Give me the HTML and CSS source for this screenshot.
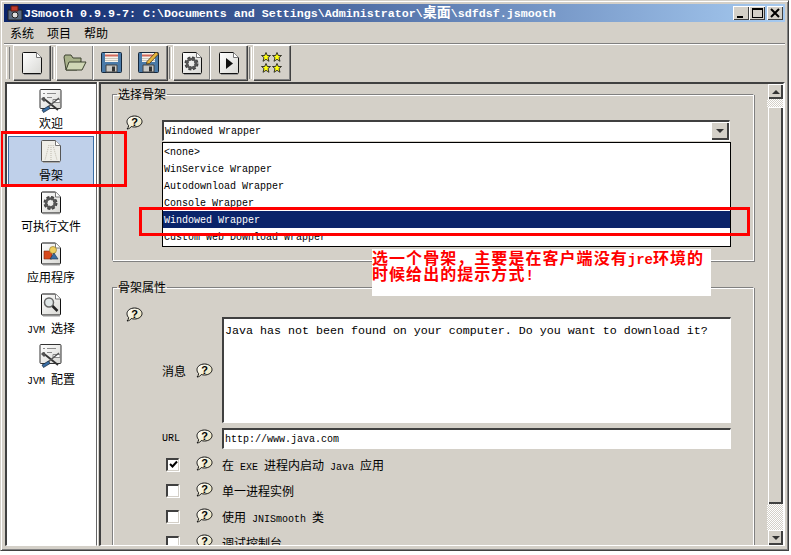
FILE: index.html
```html
<!DOCTYPE html>
<html lang="zh">
<head>
    <meta charset="UTF-8">
    <title>JSmooth</title>
    <link rel="stylesheet" href="styles.css">
</head>
<body>
    <svg class="defs" width="0" height="0">
        <defs>
            <linearGradient id="paper" x1="0" y1="0" x2="1" y2="1">
                <stop offset="0" stop-color="#fff"/>
                <stop offset="1" stop-color="#d8d8d4"/>
            </linearGradient>
            <linearGradient id="bubble" x1="0" y1="0" x2="1" y2="1">
                <stop offset="0" stop-color="#fff"/>
                <stop offset="1" stop-color="#e8dfb0"/>
            </linearGradient>
        </defs>
        <symbol id="page" viewBox="0 0 22 24">
            <path d="M2.500 1.500h13l5 5v15a1 1 0 0 1-1 1h-17a1 1 0 0 1-1-1v-19a1 1 0 0 1 1-1z" fill="url(#paper)" stroke="#111"/>
            <path d="M15.500 1.500v5h5" fill="#fff" stroke="#777"/>
            <path d="M3 23.500h17" stroke="#999"/>
        </symbol>
        <symbol id="gear" viewBox="0 0 22 24">
            <use href="#page"/>
            <circle cx="10.500" cy="12.500" r="5" fill="none" stroke="#444" stroke-width="4" stroke-dasharray="2.500 1.400"/>
            <circle cx="10.500" cy="12.500" r="4.500" fill="none" stroke="#555" stroke-width="2.500"/>
        </symbol>
        <symbol id="play" viewBox="0 0 22 24">
            <use href="#page"/>
            <path d="M8 7l7 5.500-7 5.500z" fill="#111"/>
        </symbol>
        <symbol id="folder" viewBox="0 0 24 17">
            <path d="M3 16L1 3l1-2h6l2 3h8v4h-1l-3 8z" fill="#a9b28a" stroke="#3d4230"/>
            <path d="M3 16l3-8h17l-4 8z" fill="#d0d7b6" stroke="#3d4230"/>
        </symbol>
        <symbol id="floppy" viewBox="0 0 21 21">
            <path d="M1.500.5h18a1 1 0 0 1 1 1v18a1 1 0 0 1-1 1h-18a1 1 0 0 1-1-1v-18a1 1 0 0 1 1-1z" fill="#4a7aa8" stroke="#16283c"/>
            <path d="M4 1h13v9H4z" fill="#f6f2ea"/>
            <path d="M4 3.500h13" stroke="#d2685a" stroke-width="2"/>
            <path d="M4 6.500h13M4 8.500h13" stroke="#c8c4ba"/>
            <path d="M5 13h11v7H5z" fill="#c8c8c4" stroke="#444"/>
            <path d="M11 14.500h3v5h-3z" fill="#333"/>
        </symbol>
        <symbol id="floppen" viewBox="0 0 21 21">
            <use href="#floppy"/>
            <path d="M9 9.500L18 0l2.500 2-9 9.500-3 .5z" fill="#e5b53d" stroke="#4d3510" stroke-width=".8"/>
        </symbol>
        <symbol id="star" viewBox="0 0 10 10">
            <path d="M5 .5l1.300 3h3.200L7 5.600 8 9.300 5 7.300 2 9.300l1-3.700L.5 3.500h3.200z" fill="#ffff10" stroke="#222" stroke-width=".9"/>
        </symbol>
        <symbol id="tools" viewBox="0 0 24 25">
            <path d="M2 1.500h19a1 1 0 0 1 1 1v17a1 1 0 0 1-1 1H2a1 1 0 0 1-1-1v-17a1 1 0 0 1 1-1z" fill="url(#paper)" stroke="#333"/>
            <path d="M4 5.500h2M8 5.500h9M4 9.500h2M8 9.500h5" stroke="#8a8a8a"/>
            <path d="M14 11.500h7v3h-7z" fill="#fff" stroke="#888"/>
            <path d="M4 10l15 12" stroke="#333" stroke-width="1.800"/>
            <path d="M20 10L9 19" stroke="#555" stroke-width="1.500"/>
            <path d="M9.500 18l-6.500 4 1.500 2.500 6.500-4z" fill="#3a6ea5" stroke="#14263a" stroke-width=".7"/>
            <path d="M2 11l3 3 2-2-3-3z" fill="#555"/>
        </symbol>
        <symbol id="sheet" viewBox="0 0 22 25">
            <path d="M2.500 1.500h13l5 5v15a1 1 0 0 1-1 1h-17a1 1 0 0 1-1-1v-19a1 1 0 0 1 1-1z" fill="#efeee8" stroke="#555"/>
            <path d="M15.500 1.500v5h5" fill="#fff" stroke="#777"/>
            <path d="M9 6L5 21M11 6v15M13 6l4 15" stroke="#bdb9ac" stroke-dasharray="1 1"/>
            <path d="M3 23.500h17" stroke="#aaa"/>
        </symbol>
        <symbol id="app" viewBox="0 0 22 25">
            <use href="#page"/>
            <path d="M4 10h8v8H4z" fill="#d84a1e" stroke="#7a2a10" stroke-width=".6"/>
            <circle cx="13" cy="9" r="3.500" fill="#f0d060" stroke="#8a7020" stroke-width=".6"/>
            <path d="M10 18l4-6 4 6z" fill="#3a6ea5" stroke="#1c2f45" stroke-width=".6"/>
        </symbol>
        <symbol id="lens" viewBox="0 0 22 25">
            <use href="#page"/>
            <circle cx="9" cy="10.500" r="4.500" fill="#dfe6e6" stroke="#666" stroke-width="1.500"/>
            <path d="M12.500 14l5 5" stroke="#222" stroke-width="2.500"/>
        </symbol>
        <symbol id="help" viewBox="0 0 17 15">
            <path d="M8.500 1C12.600 1 16 3.400 16 6.600S12.600 12 8.500 12c-1.200 0-2.300-.2-3.200-.5C4.600 12.800 3 13.800 1 14c.9-.8 1.500-1.900 1.600-3.400C1.600 9.600 1 8.200 1 6.600 1 3.400 4.400 1 8.500 1z" fill="url(#bubble)" stroke="#111"/>
            <text x="8.500" y="10.500" text-anchor="middle" class="help-mark">?</text>
        </symbol>
    </svg>

    <div class="window">
        <header class="titlebar">
            <svg class="app-icon" width="16" height="16" viewBox="0 0 16 16">
                <path d="M1 5h14v10H1z" fill="#5a6a80" stroke="#222"/>
                <path d="M4 1h7v5H4z" fill="#c0392b" stroke="#5a1a12"/>
                <circle cx="8" cy="10" r="3" fill="#ddd" stroke="#222"/>
            </svg>
            <span class="title-text">JSmooth 0.9.9-7: C:\Documents and Settings\Administrator\<span class="cjk-bold">桌面</span>\sdfdsf.jsmooth</span>
            <div class="caption-buttons">
                <span class="caption-btn"><i class="glyph-min"></i></span>
                <span class="caption-btn"><i class="glyph-max"></i></span>
                <span class="caption-btn close">
                    <svg width="12" height="11" viewBox="0 0 12 11"><path d="M2 1l8 8M10 1L2 9" stroke="#000" stroke-width="2"/></svg>
                </span>
            </div>
        </header>

        <nav class="menubar">
            <span>系统</span>
            <span>项目</span>
            <span>帮助</span>
        </nav>

        <div class="toolbar">
            <span class="grip"></span>
            <button class="tool"><svg width="22" height="24"><use href="#page"/></svg></button>
            <span class="tool-sep"></span>
            <button class="tool"><svg width="24" height="17"><use href="#folder"/></svg></button>
            <button class="tool"><svg width="21" height="21"><use href="#floppy"/></svg></button>
            <button class="tool"><svg width="21" height="21"><use href="#floppen"/></svg></button>
            <span class="tool-sep"></span>
            <button class="tool"><svg width="22" height="24"><use href="#gear"/></svg></button>
            <button class="tool"><svg width="22" height="24"><use href="#play"/></svg></button>
            <span class="tool-sep"></span>
            <button class="tool stars">
                <svg width="10" height="10"><use href="#star"/></svg>
                <svg width="10" height="10"><use href="#star"/></svg>
                <svg width="10" height="10"><use href="#star"/></svg>
                <svg width="10" height="10"><use href="#star"/></svg>
            </button>
        </div>

        <div class="main">
            <aside class="sidebar">
                <div class="side-item">
                    <svg width="24" height="25"><use href="#tools"/></svg>
                    <span>欢迎</span>
                </div>
                <div class="side-item selected">
                    <svg width="22" height="25"><use href="#sheet"/></svg>
                    <span>骨架</span>
                </div>
                <div class="side-item">
                    <svg width="22" height="25"><use href="#gear"/></svg>
                    <span>可执行文件</span>
                </div>
                <div class="side-item">
                    <svg width="22" height="25"><use href="#app"/></svg>
                    <span>应用程序</span>
                </div>
                <div class="side-item">
                    <svg width="22" height="25"><use href="#lens"/></svg>
                    <span><b class="latin">JVM</b> 选择</span>
                </div>
                <div class="side-item">
                    <svg width="24" height="25"><use href="#tools"/></svg>
                    <span><b class="latin">JVM</b> 配置</span>
                </div>
            </aside>

            <section class="content">
                <div class="panels">
                    <fieldset class="group skeleton-group">
                        <legend>选择骨架</legend>
                        <div class="skeleton-row">
                            <svg class="help" width="17" height="15"><use href="#help"/></svg>
                            <div class="combo">
                                <span class="latin">Windowed Wrapper</span>
                                <span class="combo-btn"><i class="arrow-down"></i></span>
                            </div>
                        </div>
                    </fieldset>

                    <fieldset class="group props-group">
                        <legend>骨架属性</legend>
                        <svg class="help props-help" width="17" height="15"><use href="#help"/></svg>
                        <div class="form">
                            <div class="msg-label">
                                <span>消息</span>
                                <svg class="help" width="17" height="15"><use href="#help"/></svg>
                            </div>
                            <div class="field textarea">Java has not been found on your computer. Do you want to download it?</div>

                            <div class="url-label">
                                <span class="latin">URL</span>
                                <svg class="help" width="17" height="15"><use href="#help"/></svg>
                            </div>
                            <div class="field input"><span class="latin">http://www.java.com</span></div>
                        </div>

                        <div class="check-row">
                            <span class="check on">
                                <svg width="9" height="9" viewBox="0 0 9 9"><path d="M1 4l2.500 2.500L8 1.500" fill="none" stroke="#000" stroke-width="2"/></svg>
                            </span>
                            <svg class="help" width="17" height="15"><use href="#help"/></svg>
                            <span>在 <b class="latin">EXE</b> 进程内启动 <b class="latin">Java</b> 应用</span>
                        </div>
                        <div class="check-row">
                            <span class="check"></span>
                            <svg class="help" width="17" height="15"><use href="#help"/></svg>
                            <span>单一进程实例</span>
                        </div>
                        <div class="check-row">
                            <span class="check"></span>
                            <svg class="help" width="17" height="15"><use href="#help"/></svg>
                            <span>使用 <b class="latin">JNISmooth</b> 类</span>
                        </div>
                        <div class="check-row">
                            <span class="check"></span>
                            <svg class="help" width="17" height="15"><use href="#help"/></svg>
                            <span>调试控制台</span>
                        </div>
                    </fieldset>
                </div>

                <div class="scrollbar">
                    <span class="scroll-btn"><i class="arrow-up"></i></span>
                    <span class="scroll-track small"></span>
                    <span class="scroll-thumb"></span>
                    <span class="scroll-track"></span>
                    <span class="scroll-btn"><i class="arrow-down"></i></span>
                </div>

                <!-- 展开的下拉列表 -->
                <ul class="dropdown">
                    <li>&lt;none&gt;</li>
                    <li>WinService Wrapper</li>
                    <li>Autodownload Wrapper</li>
                    <li>Console Wrapper</li>
                    <li class="active">Windowed Wrapper</li>
                    <li>Custom Web Download Wrapper</li>
                </ul>
            </section>
        </div>

        <!-- 截图上的标注 -->
        <div class="mark mark-side"></div>
        <div class="mark mark-row"></div>
        <div class="note">选一个骨架，主要是在客户端没有<span class="note-latin">jre</span>环境的<br>时候给出的提示方式<span class="note-latin">!</span></div>
    </div>
</body>
</html>
```

FILE: styles.css
```css
body {
    margin: 0;
    background: #fff;
    font-family: "Noto Sans CJK SC", sans-serif;
    font-size: 12px;
    color: #000;
}

.defs {
    position: absolute;
}

.help-mark {
    font-family: "Liberation Sans", sans-serif;
    font-size: 11px;
    font-weight: bold;
    fill: #000;
}

.latin {
    font-family: "Liberation Mono", monospace;
    font-size: 10px;
    font-weight: normal;
}

/* 窗口 */
.window {
    position: relative;
    width: 789px;
    height: 551px;
    box-sizing: border-box;
    padding: 3px 3px 4px 3px;
    background: #d4d0c8;
    border: 1px solid;
    border-color: #d4d0c8 #404040 #404040 #d4d0c8;
    box-shadow: inset 1px 1px 0 #fff, inset -1px -1px 0 #808080;
    overflow: hidden;
    display: flex;
    flex-direction: column;
}

.titlebar {
    flex: none;
    height: 18px;
    display: flex;
    align-items: center;
    padding: 0 2px 0 3px;
    background: linear-gradient(to right, #0a246a, #a6caf0);
    color: #fff;
}

.app-icon {
    flex: none;
    margin-right: 1px;
}

.title-text {
    font-family: "Liberation Mono", monospace;
    font-size: 11.67px;
    font-weight: bold;
    line-height: 16px;
    white-space: nowrap;
}

.cjk-bold {
    font-family: "Noto Sans CJK SC", sans-serif;
    font-size: 14px;
    line-height: 14px;
}

.caption-buttons {
    margin-left: auto;
    display: flex;
}

.caption-btn {
    width: 16px;
    height: 14px;
    display: flex;
    align-items: center;
    justify-content: center;
    background: #d4d0c8;
    box-shadow: inset 1px 1px 0 #fff, inset -1px -1px 0 #404040;
}

.caption-btn.close {
    margin-left: 2px;
}

.glyph-min {
    width: 6px;
    height: 2px;
    background: #000;
    margin: 7px 3px 0 0;
}

.glyph-max {
    width: 9px;
    height: 7px;
    border: 1px solid #000;
    border-top-width: 2px;
}

.menubar {
    flex: none;
    height: 21px;
    display: flex;
    align-items: center;
    gap: 13px;
    padding-left: 6px;
    border-bottom: 1px solid #808080;
    box-shadow: 0 1px 0 #fff;
}

/* 工具栏 */
.toolbar {
    flex: none;
    height: 35px;
    margin-top: 1px;
    display: flex;
    align-items: center;
    padding-left: 2px;
}

.grip {
    width: 2px;
    height: 32px;
    margin-right: 3px;
    border-left: 1px solid #fff;
    border-right: 1px solid #808080;
}

.tool {
    width: 37px;
    height: 35px;
    padding: 0;
    border: 0;
    display: flex;
    align-items: center;
    justify-content: center;
    background: #d4d0c8;
    box-shadow: inset 1px 1px 0 #fff, inset -1px -1px 0 #808080, 1px 1px 0 #404040;
}

.tool-sep {
    width: 1px;
    height: 32px;
    margin: 0 1px 0 2px;
    border-left: 1px solid #808080;
    border-right: 1px solid #fff;
}

.tool.stars {
    flex-wrap: wrap;
    align-content: center;
    gap: 1px;
    padding: 0 7px;
    box-sizing: border-box;
}

/* 主体 */
.main {
    flex: 1;
    min-height: 0;
    display: flex;
    gap: 2px;
    margin-top: 2px;
    padding-left: 1px;
}

.sidebar {
    flex: none;
    width: 92px;
    box-sizing: border-box;
    background: #fff;
    border-style: solid;
    border-width: 2px 1px 1px 2px;
    border-color: #404040 #666 #fff #404040;
    box-shadow: 1px 0 0 #fff;
    padding: 3px 2px 0 1px;
}

.side-item {
    height: 51px;
    box-sizing: border-box;
    display: flex;
    flex-direction: column;
    align-items: center;
    padding-top: 3px;
    gap: 2px;
    line-height: 18px;
    white-space: nowrap;
    word-spacing: 3.3px;
}

.side-item:first-child {
    height: 49px;
    padding-top: 1px;
    gap: 1px;
}

.side-item.selected {
    padding-top: 2px;
    background: #bfd0ea;
    border: 1px solid #3a6ea5;
}

.content {
    flex: 1;
    min-width: 0;
    position: relative;
    display: flex;
    box-sizing: border-box;
    border-style: solid;
    border-width: 2px 2px 1px 2px;
    border-color: #404040 #fff #fff #404040;
    overflow: hidden;
}

.panels {
    flex: 1;
    min-width: 0;
    padding: 3px 13px 0 11px;
    overflow: hidden;
}

.group {
    margin: 0;
    padding: 0;
    min-width: 0;
    border: 1px solid #808080;
    border-right-color: #fff;
    border-bottom-color: #fff;
    box-shadow: inset 1px 1px 0 #fff, 1px 1px 0 #808080;
}

.group legend {
    margin-left: 4px;
    padding: 0 1px;
    line-height: 14px;
}

.skeleton-group {
    height: 174px;
    box-sizing: border-box;
}

.skeleton-row {
    display: flex;
    align-items: flex-start;
    padding: 14px 23px 0 13px;
}

.combo {
    flex: 1;
    height: 21px;
    margin: 5px 0 0 19px;
    box-sizing: border-box;
    display: flex;
    align-items: center;
    justify-content: space-between;
    padding-left: 1px;
    background: #fff;
    border-top: 2px solid #404040;
    border-left: 2px solid #404040;
    border-right: 1px solid #fff;
    border-bottom: 1px solid #fff;
}

.combo-btn, .scroll-btn {
    display: flex;
    align-items: center;
    justify-content: center;
    background: #d4d0c8;
    box-shadow: inset 1px 1px 0 #fff, inset -2px -2px 0 #404040;
}

.combo-btn {
    width: 18px;
    height: 18px;
}

.arrow-down {
    width: 0;
    height: 0;
    border: 4px solid transparent;
    border-bottom: 0;
    border-top: 4px solid #333;
}

.arrow-up {
    width: 0;
    height: 0;
    border: 4px solid transparent;
    border-top: 0;
    border-bottom: 4px solid #333;
}

.props-group {
    margin-top: 19px;
    height: 300px;
    box-sizing: border-box;
}

.help {
    display: block;
    flex: none;
}

.props-help {
    margin: 13px 0 0 13px;
}

.form {
    display: grid;
    grid-template-columns: 109px 509px;
    grid-template-rows: 106px 21px;
    row-gap: 5px;
    margin-top: -5px;
}

.msg-label, .url-label {
    display: flex;
    align-items: center;
    padding-left: 49px;
}

.msg-label .help, .url-label .help {
    margin-left: auto;
    margin-right: 9px;
}

.url-label .help {
    margin-top: -4px;
}

.field {
    box-sizing: border-box;
    background: #fff;
    border-top: 2px solid #404040;
    border-left: 2px solid #404040;
    border-right: 1px solid #fff;
    border-bottom: 1px solid #fff;
    padding-left: 1px;
}

.textarea {
    font-family: "Liberation Mono", monospace;
    font-size: 11.67px;
    padding-top: 5px;
    white-space: nowrap;
}

.input {
    display: flex;
    align-items: center;
}

.check-row {
    height: 26px;
    display: flex;
    align-items: center;
    padding-left: 53px;
    white-space: nowrap;
    word-spacing: 3.3px;
}

.form + .check-row {
    margin-top: 2px;
}

.check {
    width: 13px;
    height: 13px;
    box-sizing: border-box;
    display: flex;
    align-items: center;
    justify-content: center;
    background: #fff;
    border-top: 2px solid #404040;
    border-left: 2px solid #404040;
    border-right: 1px solid #d4d0c8;
    border-bottom: 1px solid #d4d0c8;
    box-shadow: 1px 1px 0 #fff;
}

.check-row .help {
    margin: -2px 9px 0 17px;
}

/* 滚动条 */
.scrollbar {
    flex: none;
    width: 16px;
    display: flex;
    flex-direction: column;
}

.scroll-btn {
    height: 15px;
    flex: none;
    margin-left: 1px;
}

.scroll-track {
    flex: 1;
    background: repeating-conic-gradient(#fff 0 25%, #d4d0c8 0 50%) 0 0 / 2px 2px;
}

.scroll-track.small {
    flex: none;
    height: 8px;
}

.scroll-thumb {
    flex: none;
    height: 397px;
    margin-left: 1px;
    background: #d4d0c8;
    box-shadow: inset 1px 1px 0 #fff, inset -2px -2px 0 #404040;
}

/* 下拉列表 */
.dropdown {
    position: absolute;
    left: 61px;
    top: 58px;
    width: 569px;
    height: 105px;
    box-sizing: border-box;
    margin: 0;
    padding: 0;
    list-style: none;
    background: #fff;
    border: 1px solid #000;
    font-family: "Liberation Mono", monospace;
    font-size: 10px;
}

.dropdown li {
    height: 17px;
    line-height: 19px;
    padding-left: 1px;
}

.dropdown li.active {
    background: #0a246a;
    color: #fff;
}

/* 标注 */
.mark {
    position: absolute;
    box-sizing: border-box;
    border: 3px solid #f00;
}

.mark-side {
    left: -1px;
    top: 130px;
    width: 127px;
    height: 56px;
}

.mark-row {
    left: 138px;
    top: 206px;
    width: 611px;
    height: 29px;
}

.note {
    position: absolute;
    left: 371px;
    top: 248px;
    width: 339px;
    height: 47px;
    background: #fff;
    color: #f00;
    font-size: 16px;
    font-weight: bold;
    letter-spacing: 1.05px;
    line-height: 16px;
    white-space: nowrap;
}

.note-latin {
    font-family: "Liberation Mono", monospace;
    font-size: 14px;
    font-weight: bold;
    letter-spacing: 0;
    line-height: 0;
}
```
